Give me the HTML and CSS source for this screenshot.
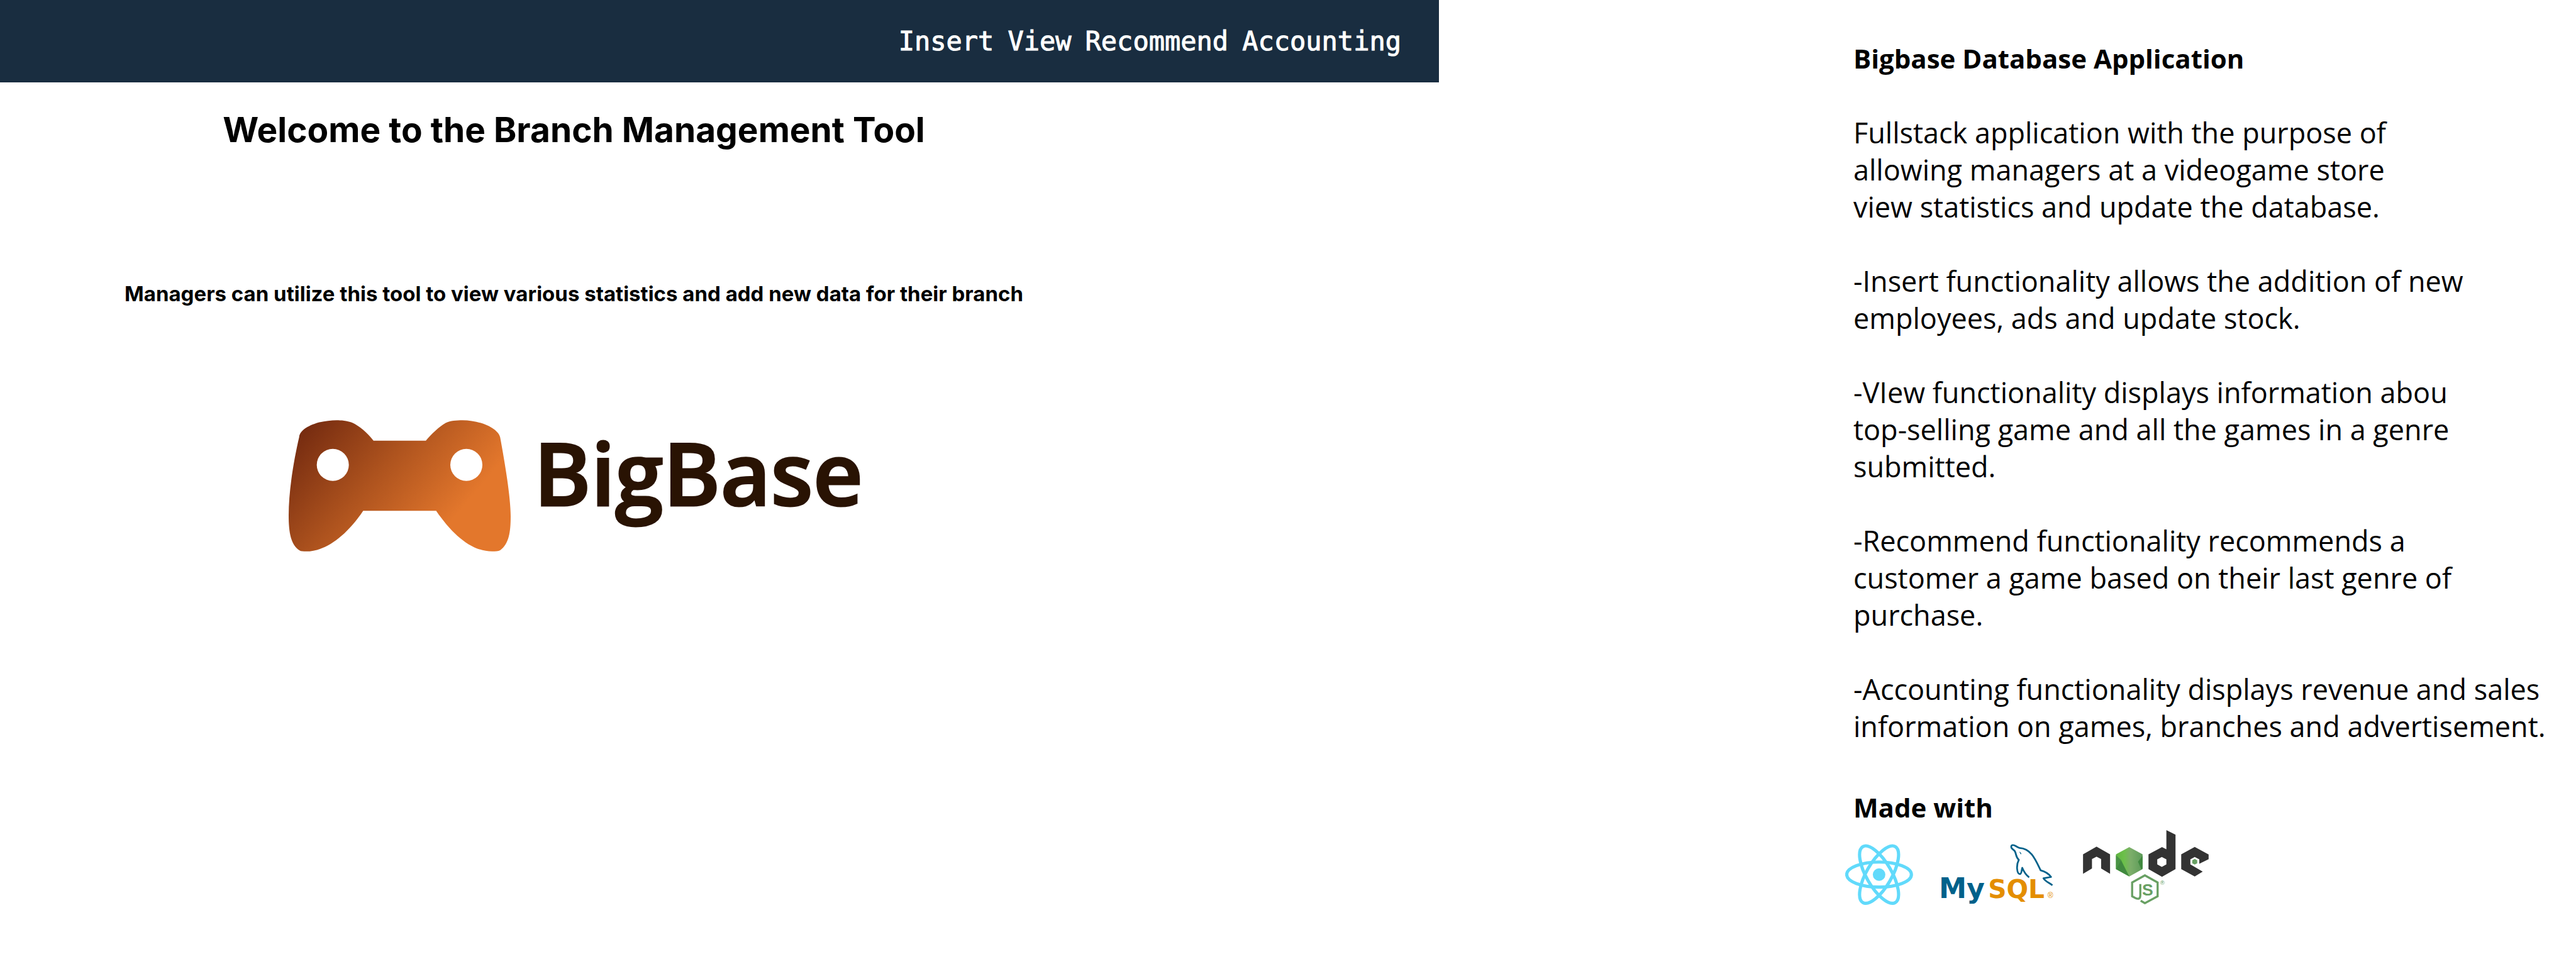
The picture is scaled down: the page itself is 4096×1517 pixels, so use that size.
FILE: index.html
```html
<!DOCTYPE html>
<html lang="en">
<head>
  <meta charset="utf-8">
  <title>BigBase</title>
  <link rel="stylesheet" href="styles.css">
</head>
<body>
  <div class="page">
    <div class="app">
      <nav class="nav">
        <a href="#insert">Insert</a>
        <a href="#view">View</a>
        <a href="#recommend">Recommend</a>
        <a href="#accounting">Accounting</a>
      </nav>
      <main class="home">
        <h1 class="home-title">Welcome to the Branch Management Tool</h1>
        <h2 class="home-lead">Managers can utilize this tool to view various statistics and add new data for their branch</h2>
        <div class="brand">
          <svg class="brand-pad" viewBox="73 102 1162 687" aria-hidden="true">
            <defs>
              <linearGradient id="pad" gradientUnits="userSpaceOnUse" x1="130" y1="160" x2="824" y2="748">
                <stop offset="0" stop-color="#752b10"/>
                <stop offset=".5" stop-color="#ae531e"/>
                <stop offset="1" stop-color="#e3772c"/>
              </linearGradient>
            </defs>
            <path fill="url(#pad)" fill-rule="evenodd" d="M128 190C133 140 230 102 325 102C345 102 380 104 405 115C440 130 485 168 517 209H791C820 175 860 135 895 116C920 104 950 102 983 102C1080 102 1172 148 1180 192C1200 300 1235 500 1235 605C1235 690 1225 750 1180 783C1170 789 1155 789 1138 789C1030 789 930 700 845 576H463C370 715 260 789 165 789C150 789 138 789 130 784C85 755 73 690 73 600C73 470 100 310 128 190ZM220 336a84 84 0 1 0 168 0a84 84 0 1 0 -168 0ZM919 336a84 84 0 1 0 168 0a84 84 0 1 0 -168 0Z"/>
          </svg>
          <span class="brand-name">BigBase</span>
        </div>
      </main>
    </div>
    <aside class="about">
      <div class="about-text">
        <h2>Bigbase Database Application</h2>
        <p>Fullstack application with the purpose of<br>allowing managers at a videogame store<br>view statistics and update the database.</p>
        <p>-Insert functionality allows the addition of new<br>employees, ads and update stock.</p>
        <p>-VIew functionality displays information abou<br>top-selling game and all the games in a genre<br>submitted.</p>
        <p>-Recommend functionality recommends a<br>customer a game based on their last genre of<br>purchase.</p>
        <p>-Accounting functionality displays revenue and sales<br>information on games, branches and advertisement.</p>
        <h2 class="made">Made with</h2>
      </div>
      <div class="stack">
        <svg class="react" viewBox="70 137 357 322" role="img" aria-label="React">
          <circle cx="248" cy="297" r="33" fill="#61dafb"/>
          <g fill="none" stroke="#61dafb" stroke-width="17">
            <ellipse cx="248" cy="297" rx="170" ry="66"/>
            <ellipse cx="248" cy="297" rx="170" ry="66" transform="rotate(60 248 297)"/>
            <ellipse cx="248" cy="297" rx="170" ry="66" transform="rotate(120 248 297)"/>
          </g>
        </svg>
        <svg class="mysql" viewBox="552 133 620 356" role="img" aria-label="MySQL">
          <g fill="none" stroke="#00618a" stroke-width="9" stroke-linejoin="round">
            <path d="M1035 308C1018 295 1008 280 999 258C995 270 996 290 987 291C970 290 966 245 981 216C962 200 970 185 958 168C945 158 937 152 943 141C955 131 968 150 985 154C1045 157 1068 215 1095 271C1120 278 1140 292 1150 306L1110 313C1122 332 1142 336 1157 350"/>
          </g>
          <path fill="#00618a" d="M982 174q11 1 12 12l-3 1q-3-4-4-8z"/>
          <text class="wordmark-my" x="562" y="417" fill="#00618a">My</text>
          <text class="wordmark" x="820" y="417" fill="#e48e00">SQL</text>
          <text class="reg" x="1132" y="417" fill="#e48e00">®</text>
        </svg>
        <svg class="node" viewBox="177 60 660 390" role="img" aria-label="Node.js">
          <defs>
            <linearGradient id="hex">
              <stop offset="0" stop-color="#5fb441"/>
              <stop offset=".3" stop-color="#6cc04a"/>
              <stop offset=".55" stop-color="#7cae6a"/>
              <stop offset="1" stop-color="#5c9a58"/>
            </linearGradient>
          </defs>
          <path fill="#333" fill-rule="evenodd" d="M177 290V187L248 147L319 187V290L272 262V212L248 200L224 212V262ZM615 60L663 84V265L592 305L521 265V187L592 149L615 161ZM591 201L567 214V240L591 253L615 240V214ZM764 148L837 188V213L788 237V214L764 201L741 214V240L806 278L764 304L693 265V187Z"/>
          <path fill="url(#hex)" d="M420 149L490 187V265L420 304L350 265V187Z"/>
          <path fill="#40893f" d="M350 265L376 216L420 304ZM490 195L466 226L483 266L490 262Z"/>
          <path fill="#499245" d="M350 192L376 216L350 265Z"/>
          <path fill="#68a063" d="M764 211L777 219V234L764 241L751 234V219Z"/>
          <path fill="none" stroke="#68a063" stroke-width="11" d="M480 431L502 444L569 408V335L502 298L435 335V408L452 417Q478 429 478 402V343"/>
          <text class="mark" x="487" y="403" fill="#68a063">S</text>
          <text class="reg-small" x="582" y="346" fill="#68a063">®</text>
        </svg>
      </div>
    </aside>
  </div>
</body>
</html>
```
FILE: styles.css
```css
* {
  box-sizing: border-box;
}

body {
  margin: 0;
  background: #fff;
  color: #000;
}

h1, h2, p {
  margin: 0;
}

.page {
  display: grid;
  grid-template-columns: 2288fr 1808fr;
}

.nav {
  display: flex;
  justify-content: flex-end;
  align-items: center;
  gap: 22px;
  height: 131px;
  padding-right: 60px;
  background: #192d40;
  font: 42px/56px "DejaVu Sans Mono", monospace;
}

.nav a {
  color: #fff;
  text-decoration: none;
  -webkit-text-stroke: 1px #fff;
}

.home {
  display: flex;
  flex-direction: column;
  align-items: center;
  padding: 41px 463px 0 0;
  font-family: Inter, sans-serif;
  white-space: nowrap;
}

.home-title {
  font-size: 55px;
  line-height: 68px;
  font-weight: 700;
}

.home-lead {
  margin-top: 205px;
  font-size: 33px;
  line-height: 44px;
  font-weight: 700;
}

.brand {
  display: flex;
  align-items: flex-start;
  gap: 37px;
  margin-top: 179px;
  padding-left: 6px;
}

.brand-pad {
  width: 353px;
  height: 209px;
}

.brand-name {
  color: #291303;
  font: 600 138px/164px "Open Sans", sans-serif;
  -webkit-text-stroke: 3px #291303;
}

.about {
  padding: 63px 0 0 646px;
  font: 45px/59px "Open Sans", sans-serif;
  white-space: nowrap;
}

.about-text {
  padding-left: 13px;
}

.about h2 {
  font-size: 42px;
  font-weight: 700;
}

.about p {
  margin-top: 59px;
}

.about .made {
  margin-top: 70px;
}

.stack {
  display: flex;
  align-items: flex-start;
  margin-top: 7px;
}

.react {
  width: 108px;
  height: 98px;
  margin-top: 22px;
}

.mysql {
  width: 188px;
  height: 108px;
  margin: 22px 0 0 38px;
}

.node {
  width: 200px;
  height: 118px;
  margin-left: 44px;
}

.wordmark {
  font: 700 134px "DejaVu Sans", sans-serif;
}

.wordmark-my {
  font: 700 146px "DejaVu Sans", sans-serif;
}

.mark {
  font: 700 88px "Liberation Sans", sans-serif;
}

.reg {
  font: 40px "Liberation Sans", sans-serif;
}

.reg-small {
  font: 32px "Liberation Sans", sans-serif;
}
```
